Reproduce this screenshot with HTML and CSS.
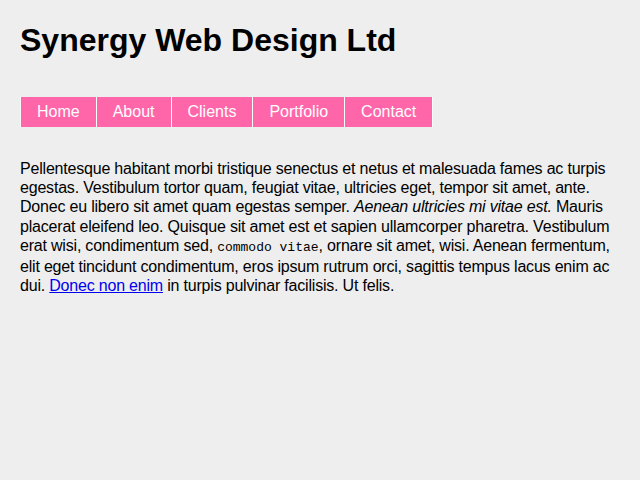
FILE: index.html
```html
<!DOCTYPE html>
<html>
<head>
<meta charset="utf-8">
<link rel="stylesheet" href="styles.css">
</head>
<body>
<div class="page">
  <h1 class="title">Synergy Web Design Ltd</h1>
  <ul class="nav">
    <li><a href="#">Home</a></li>
    <li><a href="#">About</a></li>
    <li><a href="#">Clients</a></li>
    <li><a href="#">Portfolio</a></li>
    <li><a href="#">Contact</a></li>
  </ul>
  <p class="text">Pellentesque habitant morbi tristique senectus et netus et malesuada fames ac turpis egestas. Vestibulum tortor quam, feugiat vitae, ultricies eget, tempor sit amet, ante. Donec eu libero sit amet quam egestas semper. <em>Aenean ultricies mi vitae est.</em> Mauris placerat eleifend leo. Quisque sit amet est et sapien ullamcorper pharetra. Vestibulum erat wisi, condimentum sed, <code>commodo vitae</code>, ornare sit amet, wisi. Aenean fermentum, elit eget tincidunt condimentum, eros ipsum rutrum orci, sagittis tempus lacus enim ac dui. <a href="#" class="link">Donec non enim</a> in turpis pulvinar facilisis. Ut felis.</p>
</div>
</body>
</html>
```
FILE: styles.css
```css
html, body {
  margin: 0;
  padding: 0;
  background: #eeeeee;
}
body {
  font-family: "Liberation Sans", Arial, sans-serif;
  color: #000;
}
.page {
  width: 600px;
  padding: 20px 20px;
}
.title {
  margin: 0 0 37px 0;
  font-size: 32px;
  font-weight: bold;
  line-height: 40px;
}
.nav {
  list-style: none;
  margin: 0;
  padding: 0;
  display: flex;
  border-left: 1px solid #f8f8f8;
}
.nav li {
  border-right: 1px solid #ffffff;
}
.nav a {
  display: block;
  background: #ff66aa;
  color: #ffffff;
  text-decoration: none;
  font-size: 16px;
  line-height: 30px;
  padding: 0 16px;
}
.text {
  margin: 32px 0 0 0;
  font-size: 16px;
  line-height: 19.2px;
  letter-spacing: -0.2px;
}
.text code {
  font-family: "Liberation Mono", "Courier New", monospace;
  font-size: 13px;
  letter-spacing: 0;
}
.link {
  color: #0000ee;
}
```
